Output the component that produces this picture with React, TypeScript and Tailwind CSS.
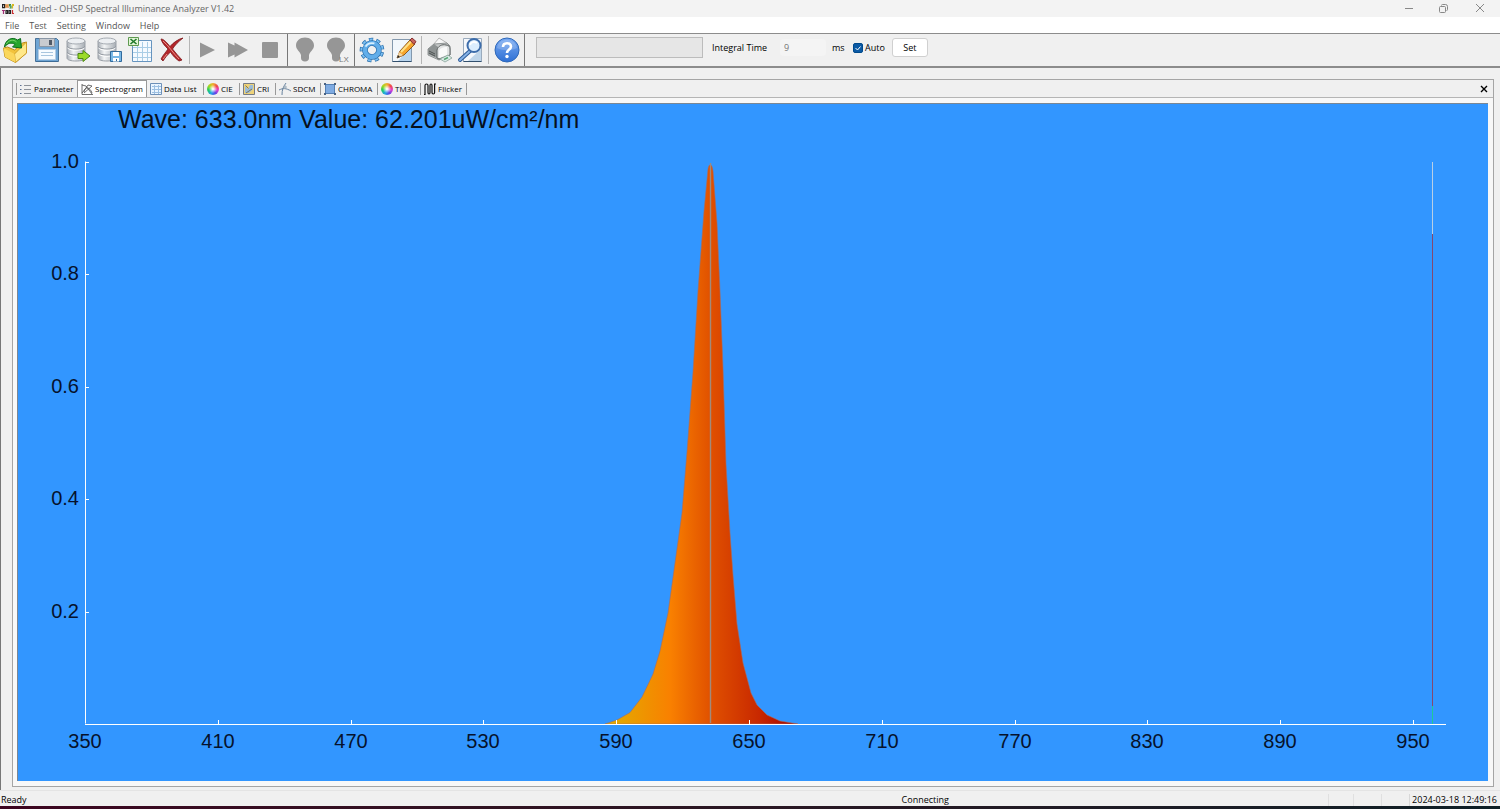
import React from "react";

const menus = ["File", "Test", "Setting", "Window", "Help"];

const curve =
  "M588 621 L600 617 L613 609.5 L625 594 L636 571 L643 548 L651 510 L658 460 L665 410 L670 349 L676 269 L681 188 L687 108 L691 66 C692 60 695 60 696 68 L700 120 L703 188 L706 265 L709 361 L713 430 L716 472 L720 521 L726 560 L734 590 L740 602 L750 612 L763 618 L781 621 Z";

const waveTicks = [350, 410, 470, 530, 590, 650, 710, 770, 830, 890, 950];
const valueTicks = ["1.0", "0.8", "0.6", "0.4", "0.2"];

function Icon({ children }: { children: React.ReactNode }) {
  return (
    <svg viewBox="0 0 26 26" className="size-[26px] overflow-visible" aria-hidden="true">
      {children}
    </svg>
  );
}

function Cylinder() {
  return (
    <>
      <path d="M2 4v17c0 2 4 3 9 3s9-1 9-3V4z" fill="url(#metal)" stroke="#9aa0a7" />
      <ellipse cx="11" cy="4" rx="9" ry="3" fill="#eceff2" stroke="#a5abb2" />
      <path d="M2 9.500c2 3.500 16 3.500 18 0M2 15.500c2 3.500 16 3.500 18 0" fill="none" stroke="#8b929a" />
      <path d="M2.500 11c3 3 14 3 17 0M2.500 17c3 3 14 3 17 0" fill="none" stroke="#fff" />
    </>
  );
}

function Bulb() {
  return (
    <path
      d="M13 0.500c-5 0-9 3.500-9 8 0 4 4 6 5 9.500v3c0 2 1.500 3.500 4 3.500s4-1.500 4-3.500v-3c1-3.500 5-5.500 5-9.500 0-4.500-4-8-9-8z"
      fill="#969696"
    />
  );
}

const toolGroups = [
  {
    line: "h-7 bg-[#b5b5b5]",
    tools: [
      {
        name: "Open",
        icon: (
          <>
            <path d="M0.500 11l4-1 7 3 8-7 4-1v11l-11 9.500L2 20z" fill="#f2c33c" stroke="#b98a1b" />
            <path d="M11.500 17L23.500 5v11l-11 9.500z" fill="#ffe88a" stroke="#c89620" strokeWidth="0.800" />
            <path d="M0.500 11l11 6 1 8.500L2 20z" fill="#fbd75c" />
            <path d="M1.500 10C2 3 9-1 14.500 3l3-1.500 1 9.500-9-1 2.500-2.500C8.500 5 4.500 6 1.500 10z" fill="#27a52e" stroke="#0d6d1b" />
            <path d="M3.500 7c2-4 7-5 10-2" fill="none" stroke="#7ed66f" />
          </>
        ),
      },
      {
        name: "Save",
        icon: (
          <>
            <path d="M1.500 1.500h21l2 2v21h-23z" fill="#6fa5d4" stroke="#4a7399" />
            <path d="M5.500 1.500h15v8h-15z" fill="#c8cbd0" stroke="#8a97a6" />
            <path d="M15 3h3v5h-3z" fill="#505a68" />
            <path d="M4.500 12.500h17v10h-17z" fill="#f7fbff" stroke="#b7cee5" />
            <path d="M7 15.500h12M7 18.500h12" stroke="#a8c5de" />
            <path d="M2 24.500h22" stroke="#3d6c97" />
          </>
        ),
      },
      {
        name: "Export data",
        icon: (
          <>
            <Cylinder />
            <path d="M13 16.500h5v-3l7 5.500-7 5.500v-3h-5z" fill="#9bdb27" stroke="#4b8912" />
          </>
        ),
      },
      {
        name: "Save data",
        icon: (
          <>
            <Cylinder />
            <path d="M14.500 14.500h11v10h-11z" fill="#79b8e6" stroke="#316a9c" />
            <path d="M17 15h6v4h-6zM17 21h6v3.500h-6z" fill="#fff" />
            <path d="M20.500 22v2" stroke="#316a9c" />
          </>
        ),
      },
      {
        name: "Export to Excel",
        icon: (
          <>
            <path d="M5.500 3.500h19v21h-19z" fill="#f5faff" stroke="#6694bf" />
            <path d="M6 10.500h18M6 15.500h18M6 20.500h18M10.500 5v19M15.500 5v19M20.500 5v19" stroke="#a9cde6" />
            <path d="M1.500 0.500h10v8h-10z" fill="#e3f5d7" stroke="#5f9a50" />
            <path d="M3.500 2l6 5M9.500 2l-6 5" stroke="#20792b" strokeWidth="1.600" />
          </>
        ),
      },
      {
        name: "Delete",
        icon: (
          <>
            <path d="M3 2c3 0 6 4 9 7.500C15 6 20 2 25 1c-5 4-8 7-10.500 11 3 4 6 7 9.500 11l-3 1c-3-2-6-5-8.500-9C9 18 7 21 5 24l-2-2c2-4 5-7 7-10C7 9 4 6 3 2z" fill="#b3262a" stroke="#7d171b" strokeWidth="0.800" />
            <path d="M5 4c6 5 10 12 16 18M9 17l-4 5" fill="none" stroke="#ee8f86" />
          </>
        ),
      },
    ],
  },
  {
    line: "h-8 bg-[#777]",
    tools: [
      { name: "Start", icon: <path d="M6 5.500l15 7.500-15 7.500z" fill="#969696" /> },
      { name: "Continuous test", icon: <path d="M3 5.500l6.500 3V5.500L23 13 9.500 20.500v-3l-6.500 3z" fill="#969696" /> },
      { name: "Stop", icon: <rect x="6" y="5" width="16" height="16" rx="1" fill="#969696" /> },
    ],
  },
  {
    line: "h-8 bg-[#777]",
    tools: [
      { name: "Lamp", icon: <Bulb /> },
      {
        name: "Lamp lux",
        icon: (
          <>
            <Bulb />
            <text x="16" y="25" fontSize="8" fontFamily="Liberation Sans, sans-serif" fill="#777">
              LX
            </text>
          </>
        ),
      },
    ],
  },
  {
    line: "h-7 bg-[#b5b5b5]",
    tools: [
      {
        name: "Settings",
        icon: (
          <g transform="rotate(12 13 13)">
            <circle cx="13" cy="13" r="10" fill="none" stroke="#2b6fac" strokeWidth="4.600" strokeDasharray="3.900 3.081" />
            <circle cx="13" cy="13" r="10" fill="none" stroke="#7cc0f3" strokeWidth="3" strokeDasharray="2.900 4.081" strokeDashoffset="-0.500" />
            <circle cx="13" cy="13" r="7" fill="none" stroke="#2b6fac" strokeWidth="5.600" />
            <circle cx="13" cy="13" r="7" fill="none" stroke="#62aeea" strokeWidth="4.200" />
            <path d="M6 11c1-3 4-5 8-5" fill="none" stroke="#d8f0ff" strokeWidth="1.800" />
          </g>
        ),
      },
      {
        name: "Edit",
        icon: (
          <>
            <path d="M2.500 2.500h19v22h-19z" fill="#f2f7fc" stroke="#8398ad" />
            <path d="M8 24L21 10v14z" fill="#b9d5ee" />
            <path d="M2.500 24.500h19" stroke="#33506e" />
            <path d="M7 21l3-7L20 3l5 4-11 11z" fill="#f6a62d" stroke="#8f581b" />
            <path d="M11 15L21 4.500" stroke="#ffe287" strokeWidth="2" />
            <path d="M20 3l2-2 4 3.500-2 3z" fill="#c9635c" stroke="#853030" />
            <path d="M7 21l2-6 4 3z" fill="#f4d4a1" />
            <path d="M7 21l1-3 2 2z" fill="#222" />
          </>
        ),
      },
    ],
  },
  {
    line: "h-7 bg-[#b5b5b5]",
    tools: [
      {
        name: "Print",
        icon: (
          <>
            <path d="M7 8l6-7 8 5-4 6z" fill="#f7f7f7" stroke="#a4a4a4" strokeWidth="0.800" />
            <path d="M2 12l6-5 13-1 3 3v9l-11 5-11-5z" fill="#c4c7c7" stroke="#7b8080" strokeWidth="0.800" />
            <path d="M2 12l6-5 4 3-1 11-9-4z" fill="#8e9393" />
            <path d="M11 13c1-4 5-6 9-5 3 0 4 2 4 4v6l-11 4-2-1z" fill="#e2e4e4" stroke="#5d6262" />
            <path d="M13 14c1-3 4-4 8-4v8l-8 3z" fill="#fafafa" />
            <path d="M3 14l6 3M3 16l6 3" stroke="#4d5252" />
            <path d="M14 22l8-4 4 3-7 4z" fill="#d9ebe6" stroke="#8aa39a" strokeWidth="0.800" />
            <path d="M18 22.500l4-2" stroke="#58a575" strokeWidth="1.500" />
          </>
        ),
      },
      {
        name: "Print preview",
        icon: (
          <>
            <path d="M6.500 1.500h18v23h-18z" fill="#f5f8fc" stroke="#9aabbd" />
            <path d="M11 24L24 12v12z" fill="#bfd5e9" />
            <path d="M6.500 24.500h18" stroke="#33506e" />
            <path d="M13 14l-10 9" stroke="#2c5a98" strokeWidth="4" strokeLinecap="round" />
            <path d="M13 14l-10 9" stroke="#86b2e6" strokeWidth="2" strokeLinecap="round" />
            <circle cx="17" cy="8.500" r="6.500" fill="#dceefe" stroke="#3d6dab" strokeWidth="2" />
            <path d="M13 8c1-3 4-4 7-2" fill="none" stroke="#fff" strokeWidth="2" />
          </>
        ),
      },
    ],
  },
  {
    line: "h-8 bg-[#777]",
    tools: [
      {
        name: "Help",
        icon: (
          <>
            <circle cx="14" cy="13" r="12" fill="url(#help)" stroke="#2f68b8" />
            <path d="M4 11c1-6 5-8 10-8s9 3 10 8c-6 3-14 3-20 0z" fill="#fff" opacity=".18" />
            <path d="M10 10c0-5 8-5 8-0.500 0 3-4 3-4 6.500" fill="none" stroke="#fff" strokeWidth="2.600" />
            <circle cx="14" cy="19.500" r="1.700" fill="#fff" />
          </>
        ),
      },
    ],
  },
];

function ColorWheel() {
  return (
    <span className="size-3 shrink-0 rounded-full bg-[radial-gradient(circle,#fff_5%,transparent_50%),conic-gradient(#f0b030,#f04848,#e040d0,#5848e8,#20a8e8,#20cc60,#a8d820,#f0b030)]" />
  );
}

function SmallIcon({ children }: { children: React.ReactNode }) {
  return (
    <svg viewBox="0 0 12 12" className="size-3 shrink-0" fill="none" aria-hidden="true">
      {children}
    </svg>
  );
}

const tabs = [
  {
    name: "Parameter",
    width: "w-[60px]",
    icon: (
      <SmallIcon>
        <path d="M4 2.500h7M4 6.500h7M4 10.500h7" stroke="#8d9299" />
        <path d="M0 2.500h1.500M0 6.500h1.500M0 10.500h1.500" stroke="#586d91" />
      </SmallIcon>
    ),
  },
  {
    name: "Spectrogram",
    width: "w-[68px]",
    icon: (
      <SmallIcon>
        <path d="M1 1v10.500h11M1 2l4 1 6 8M1 10l4-5 2-3 4 1M3 10l8-7M3 9c1-6 6-5 8 1" stroke="#4c4c4c" strokeWidth="0.800" />
      </SmallIcon>
    ),
  },
  {
    name: "Data List",
    width: "w-[56px]",
    icon: (
      <SmallIcon>
        <path d="M.5.5h11v11H.5z" fill="#eaf5ff" stroke="#6d90b8" />
        <path d="M2 3.500h9M2 6.500h9M2 9.500h9M4.500 2v9M8.500 2v9" stroke="#9dc0e2" />
      </SmallIcon>
    ),
  },
  { name: "CIE", width: "w-[35px]", icon: <ColorWheel /> },
  {
    name: "CRI",
    width: "w-[35px]",
    icon: (
      <SmallIcon>
        <path d="M.5.5h11v11H.5z" fill="#eed278" stroke="#777b83" />
        <path d="M2 3l3 3 2-4h3v4L6 10H2z" fill="#9bbcd8" />
        <path d="M2.500 2.500l3 3M3 10l6-4" stroke="#766336" strokeWidth="0.800" />
      </SmallIcon>
    ),
  },
  {
    name: "SDCM",
    width: "w-[44px]",
    icon: (
      <SmallIcon>
        <path d="M0 7c4-2 7-2 12 1M7 0C4 4 3 7 3 12" stroke="#66819d" />
        <path d="M4 4h4M6 2v4" stroke="#9aabb9" />
      </SmallIcon>
    ),
  },
  {
    name: "CHROMA",
    width: "w-[56px]",
    icon: (
      <SmallIcon>
        <path d="M1.500 1.500h9v9h-9z" fill="#7fabe2" stroke="#5580b4" />
        <path d="M0 0h2v2H0zM10 0h2v2h-2zM0 10h2v2H0zM10 10h2v2h-2z" fill="#4a6384" />
      </SmallIcon>
    ),
  },
  { name: "TM30", width: "w-[42px]", icon: <ColorWheel /> },
  {
    name: "Flicker",
    width: "w-[45px]",
    icon: (
      <SmallIcon>
        <path d="M0 11.500h1v-9q0-1.500 1.500-1.500t1.500 1.500v7q0 1.500 1 1.500t1-1.500v-7Q6 1 7 1T8 2.500v7q0 1.500 1.300 1.500t1.300-1.500V1H12" stroke="#111" strokeWidth="1.200" />
      </SmallIcon>
    ),
  },
];

function Spectrogram() {
  return (
    <svg viewBox="1 1 1470 677" className="block w-full" fontFamily="Liberation Sans, Arial, sans-serif">
      <defs>
        <linearGradient id="spectrum" gradientUnits="userSpaceOnUse" x1="588" x2="781" y1="0" y2="0">
          <stop offset="0" stopColor="#e0b000" />
          <stop offset="0.34" stopColor="#f98000" />
          <stop offset="0.55" stopColor="#e05000" />
          <stop offset="0.8" stopColor="#c82800" />
          <stop offset="1" stopColor="#a00000" />
        </linearGradient>
      </defs>
      <text x="101" y="25" fontSize="25" fill="#06101c">
        Wave: 633.0nm Value: 62.201uW/cm²/nm
      </text>
      <path d={curve} fill="url(#spectrum)" stroke="#a56b61" strokeWidth="0.600" />
      <path d="M693.500 60v560" stroke="#a08a7c" strokeWidth="1.400" />
      <path d="M68.500 58.500v562M68 621.500h1361" stroke="#fff" />
      {valueTicks.map((tick, i) => (
        <g key={tick}>
          <path d={`M69 ${59.5 + Math.round(i * 112.4)}h3`} stroke="#fff" />
          <text x="62" y={65 + Math.round(i * 112.4)} fontSize="20" textAnchor="end" fill="#06122c">
            {tick}
          </text>
        </g>
      ))}
      {waveTicks.map((tick, i) => (
        <g key={tick}>
          {i > 0 && <path d={`M${68.5 + Math.round(i * 132.8)} 621v-4`} stroke="#fff" />}
          <text x={68 + Math.round(i * 132.8)} y="645" fontSize="20" textAnchor="middle" fill="#06122c">
            {tick}
          </text>
        </g>
      ))}
      <path d="M1415.500 59v72" stroke="#b9cfe5" />
      <path d="M1415.500 131v472" stroke="#85496f" />
      <path d="M1415.500 603v18" stroke="#20c997" />
    </svg>
  );
}

export default function App() {
  return (
    <div className="flex min-h-screen flex-col bg-[#f0f0f0] font-['Open_Sans','Noto_Sans',sans-serif] text-[9px] leading-3 text-black">
      <svg className="absolute size-0" aria-hidden="true">
        <defs>
          <linearGradient id="metal">
            <stop stopColor="#aab0b7" />
            <stop offset=".35" stopColor="#f3f5f6" />
            <stop offset="1" stopColor="#a7adb4" />
          </linearGradient>
          <linearGradient id="help" x2="0" y2="1">
            <stop stopColor="#79aaf2" />
            <stop offset="1" stopColor="#2f70d4" />
          </linearGradient>
        </defs>
      </svg>

      <header className="flex h-[17px] items-center bg-[#f3f3f3] pl-[2px] text-[#666]">
        <svg viewBox="0 0 12 12" className="mr-1 size-3" fill="none" strokeWidth="1.200" aria-hidden="true">
          <path d="M.6 1.600h2v3h-2z" stroke="#222" />
          <path d="M4 1v4M4 3h2M6 1v4" stroke="#d97a22" />
          <path d="M9 1.600H7.600v1.400H9v2H7.500" stroke="#2b8b45" />
          <path d="M10.500 5.500V1.600h1.200V3" stroke="#d8b81e" />
          <path d="M0 7.500h3M1.500 7.500V11" stroke="#a22e76" />
          <path d="M4 7.500h1.500v3H4zM7 7.500h1.500v3H7z" stroke="#222" />
          <path d="M10.500 7v3.500H12" stroke="#cf3030" />
        </svg>
        <h1 className="flex-1">Untitled - OHSP Spectral Illuminance Analyzer V1.42</h1>
        <button aria-label="Minimize" className="flex w-[34px] justify-center">
          <svg viewBox="0 0 10 10" className="size-[10px]" stroke="#888">
            <path d="M1 4.500h8" />
          </svg>
        </button>
        <button aria-label="Restore" className="flex w-[34px] justify-center">
          <svg viewBox="0 0 10 10" className="size-[10px]" fill="none" stroke="#888">
            <rect x="1.500" y="2.500" width="6" height="6" rx="1" />
            <path d="M3.500 1.500q0-1 1-1h3q2 0 2 2v3q0 1-1 1" />
          </svg>
        </button>
        <button aria-label="Close" className="flex w-10 justify-center">
          <svg viewBox="0 0 10 10" className="size-[10px]" stroke="#888">
            <path d="M1 0l8 8M9 0L1 8" />
          </svg>
        </button>
      </header>

      <nav className="flex h-4 items-end gap-[10px] bg-white pb-px pl-[5px] text-[#555]">
        {menus.map((menu) => (
          <button key={menu}>{menu}</button>
        ))}
      </nav>

      <div className="flex h-[35px] items-start border-t border-b-2 border-t-[#8c8c8c] border-b-[#8c8c8c]">
        {toolGroups.map((group, groupIdx) => (
          <div key={groupIdx} className="flex items-center">
            {group.tools.map((tool) => (
              <button key={tool.name} aria-label={tool.name} className="flex h-8 w-[31px] items-center justify-center">
                <Icon>{tool.icon}</Icon>
              </button>
            ))}
            <span className={`mr-px ml-[3px] w-px ${group.line}`} />
          </div>
        ))}
        <div className="flex h-[27px] items-center pl-[10px]">
          <div className="h-[21px] w-[167px] border border-[#bcbcbc] bg-[#e6e6e6]" />
          <label htmlFor="integral" className="ml-[9px] w-[60px] whitespace-nowrap">
            Integral Time
          </label>
          <input
            id="integral"
            defaultValue="9"
            className="ml-2 h-[17px] w-[46px] rounded-sm bg-[#f4f4f4] px-[4px] text-[#777]"
          />
          <span className="ml-[6px] w-[21px]">ms</span>
          <label className="flex items-center gap-[2px]">
            <span className="relative size-[10px]">
              <input
                type="checkbox"
                defaultChecked
                className="peer block size-[10px] appearance-none rounded-xs border border-[#666] checked:border-[#004a8c] checked:bg-[#0b5aa5]"
              />
              <svg
                viewBox="0 0 10 10"
                className="pointer-events-none absolute inset-0 hidden size-[10px] peer-checked:block"
                fill="none"
                stroke="#fff"
              >
                <path d="M2.500 5l2 2 3-3.500" />
              </svg>
            </span>
            Auto
          </label>
          <button className="ml-[7px] h-[19px] w-9 rounded-[3px] border border-[#d0d0d0] bg-white">Set</button>
        </div>
      </div>

      <main className="mr-[2px] flex-1 border-l border-[#777] pt-[11px] pr-1 pb-[3px] pl-[11px]">
        <section className="border border-[#a5a5a5] bg-[#f8f8f8]">
          <div className="flex h-[18px] items-end justify-between border-b border-[#b5b5b5] bg-[#f0f0f0] pr-1">
            <div role="tablist" className="flex items-end pl-[3px] text-[8px]">
              {tabs.map((tab) => (
                <button
                  key={tab.name}
                  role="tab"
                  aria-selected={tab.name === "Spectrogram"}
                  className={`flex h-[17px] items-center ${
                    tab.name === "Spectrogram" ? "border border-b-0 border-[#999] bg-white" : ""
                  }`}
                >
                  {tab.name === "Parameter" && <span className="h-3 w-px bg-[#999]" />}
                  <span className={`flex items-center gap-[2px] pl-[3px] whitespace-nowrap ${tab.width}`}>
                    {tab.icon}
                    {tab.name}
                  </span>
                  {tab.name !== "Spectrogram" && tab.name !== "Parameter" && <span className="h-3 w-px bg-[#999]" />}
                </button>
              ))}
            </div>
            <button aria-label="Close tab" className="mb-[3px]">
              <svg viewBox="0 0 10 10" className="size-[10px]" stroke="#000" strokeWidth="1.400">
                <path d="M2 2l6 6M8 2L2 8" />
              </svg>
            </button>
          </div>
          <div className="pt-[5px] pr-[5px] pb-[5px] pl-1">
            <div className="border-t border-l border-[#7b8794] bg-[#3296ff]">
              <Spectrogram />
            </div>
          </div>
        </section>
      </main>

      <footer className="flex h-4 items-end border-t border-[#e4e4e4] pr-[3px] pl-px">
        <span className="w-3/5">Ready</span>
        <span className="flex-1 pl-[3px]">Connecting</span>
        <span className="h-3 w-[25px] border-l border-[#e0e0e0]" />
        <span className="h-3 w-7 border-l border-[#e0e0e0]" />
        <span className="h-3 w-7 border-l border-[#e0e0e0]" />
        <time className="border-l border-[#d8d8d8] pl-[2px]">2024-03-18 12:49:16</time>
      </footer>
      <div className="h-[3px] bg-linear-to-r from-[#3d0520] to-[#0d1f26]" />
    </div>
  );
}
